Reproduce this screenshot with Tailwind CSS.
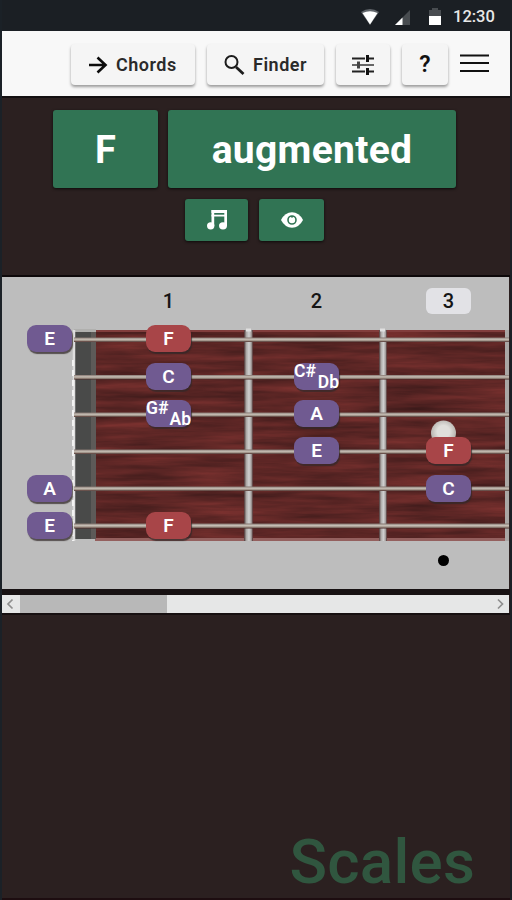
<!DOCTYPE html>
<html lang="en">
<head>
  <meta charset="UTF-8" />
  <meta name="viewport" content="width=device-width, initial-scale=1.0" />
  <title>Scales - F augmented</title>
  <script src="https://cdn.jsdelivr.net/npm/@tailwindcss/browser@4"></script>
</head>
<body class="bg-[#1b2127] font-['Roboto',sans-serif] h-[900px] w-[512px] overflow-hidden">
  <div class="flex flex-col h-[900px] w-[508px] ml-[2px] bg-[#2b2020]">

    <!-- Status bar -->
    <div class="flex items-center justify-end h-[31px] shrink-0 bg-[#1b1f24] pt-[3px] pr-[15px] text-[#e8e8e8]">
      <svg class="w-[20px] h-[18px]" viewBox="0 0 20 18">
        <path d="M1 4Q10-2 19 4L10 17Z" fill="#60656a" />
        <path d="M2.500 5Q10 1.500 17.500 5L10 16.500Z" fill="#fff" />
      </svg>
      <svg class="w-[16px] h-[17px] ml-[15px]" viewBox="0 0 16 17">
        <path d="M0 16L15 1V16Z" fill="#484c50" />
        <path d="M0 16L7.500 8.500V16Z" fill="#fff" />
      </svg>
      <svg class="w-[12px] h-[18px] ml-[18px]" viewBox="0 0 12 18">
        <path d="M0 2H3V0H9V2H12V9H0Z" fill="#484c50" />
        <path d="M0 8H12V17H0Z" fill="#fff" />
      </svg>
      <span class="ml-[12px] w-[42px] text-[16.500px] leading-none whitespace-nowrap font-medium">12:30</span>
    </div>

    <!-- Toolbar -->
    <div class="flex items-start h-[67px] shrink-0 bg-[#f8f8f8] border-b-2 border-[#141011] pt-[13px] pl-[69px] text-[#2a2a2a] text-[18px] font-semibold">
      <button class="flex items-center w-[124px] h-[41px] pl-[16px] rounded-sm bg-[#f5f5f5] shadow-[0_2px_3px_rgba(0,0,0,0.38)]">
        <svg class="w-[21px] h-[20px]" viewBox="0 0 21 20" fill="none" stroke="#0c0c0c" stroke-width="2.600"><path d="M2 10H18.500M10.500 2.500L18.500 10L10.500 17.500" /></svg>
        <span class="ml-[8px] tracking-[0.5px]">Chords</span>
      </button>
      <button class="flex items-center w-[117px] h-[41px] pl-[16px] ml-[12px] rounded-sm bg-[#f5f5f5] shadow-[0_2px_3px_rgba(0,0,0,0.38)]">
        <svg class="w-[22px] h-[22px]" viewBox="0 0 22 22" fill="none" stroke="#1c1c1c"><circle cx="8.500" cy="8" r="6" stroke-width="2" /><path d="M13 13L20.500 20" stroke-width="2.800" /></svg>
        <span class="ml-[8px] tracking-[0.5px]">Finder</span>
      </button>
      <button class="flex items-center justify-center w-[54px] h-[41px] ml-[12px] rounded-sm bg-[#f5f5f5] shadow-[0_2px_3px_rgba(0,0,0,0.38)]">
        <svg class="w-[22px] h-[22px]" viewBox="0 0 22 22" fill="none" stroke="#222">
          <path d="M0 4.500H13M17 4.500H22M0 17.500H13M17 17.500H22" stroke-width="1.900" />
          <path d="M0 11H5M8 11H22" stroke="#666" stroke-width="1.900" />
          <path d="M15.500 1V8M15.500 14V21" stroke="#111" stroke-width="3" />
          <path d="M6.500 7.500V14.500" stroke="#444" stroke-width="3" />
        </svg>
      </button>
      <button class="w-[46px] h-[41px] ml-[12px] rounded-sm bg-[#f5f5f5] text-[23px] leading-[41px] text-[#111] shadow-[0_2px_3px_rgba(0,0,0,0.38)]">?</button>
      <svg class="w-[29px] h-[20px] ml-[12px] mt-[9px]" viewBox="0 0 29 20" stroke="#111" stroke-width="2.200"><path d="M0 2.500H29M0 10H29M0 18H29" /></svg>
    </div>

    <!-- Scale picker -->
    <div class="flex flex-col h-[179px] shrink-0 border-b-2 border-[#0d0809] pt-[12px] text-white font-bold">
      <div class="flex gap-[10px] ml-[51px]">
        <button class="w-[105px] h-[78px] pt-[2px] rounded-[3px] bg-[#317454] text-[38px] shadow-[0_1px_3px_rgba(0,0,0,0.7)]">F</button>
        <button class="w-[288px] h-[78px] pt-[2px] rounded-[3px] bg-[#317454] text-[39px] tracking-[0.300px] shadow-[0_1px_3px_rgba(0,0,0,0.7)]">augmented</button>
      </div>
      <div class="flex gap-[11px] mt-[11px] ml-[183px]">
        <button class="flex items-center justify-center w-[63px] h-[42px] rounded-[3px] bg-[#317454] shadow-[0_1px_3px_rgba(0,0,0,0.7)]">
          <svg class="w-[20px] h-[20px]" viewBox="0 0 20 20" fill="#fff">
            <path d="M4.500 0H20V3H4.500Z" /><path d="M4.500 4.700H20V6.500H4.500Z" />
            <path d="M4.500 0H7.200V16H4.500ZM17.300 0H20V16H17.300Z" />
            <ellipse cx="3.700" cy="15.800" rx="3.700" ry="3.600" /><ellipse cx="16" cy="15.800" rx="4" ry="3.600" />
          </svg>
        </button>
        <button class="flex items-center justify-center w-[65px] h-[42px] rounded-[3px] bg-[#317454] shadow-[0_1px_3px_rgba(0,0,0,0.7)]">
          <svg class="w-[22px] h-[16px]" viewBox="0 0 22 16">
            <path d="M0 8Q4 .3 11 .3T22 8Q18 15.700 11 15.700T0 8Z" fill="#fff" />
            <circle cx="11" cy="8" r="4" fill="none" stroke="#317454" stroke-width="1.600" />
            <circle cx="11" cy="4.800" r="1" fill="#317454" />
          </svg>
        </button>
      </div>
    </div>

    <!-- Fretboard -->
    <div class="relative h-[312px] shrink-0 w-[507px] bg-[#bdbdbd] overflow-hidden">
      <svg class="absolute left-[70px] top-[49px] w-[437px] h-[218px]" viewBox="72 326 437 218">
        <defs>
          <filter id="grain" x="0" y="0" width="100%" height="100%" color-interpolation-filters="sRGB">
            <feTurbulence type="fractalNoise" baseFrequency="0.011 0.13" numOctaves="4" seed="8" />
            <feColorMatrix values="0.3 0 0 0 0.215  0.11 0 0 0 0.095  0.1 0 0 0 0.095  0 0 0 0 1" />
          </filter>
          <linearGradient id="fret">
            <stop offset="0" stop-color="#4a3030" /><stop offset=".25" stop-color="#aaa7a5" /><stop offset=".55" stop-color="#d0d0d0" /><stop offset=".8" stop-color="#a9a5a4" /><stop offset="1" stop-color="#4a2626" />
          </linearGradient>
          <linearGradient id="string" x2="0" y2="1">
            <stop offset="0" stop-color="#857771" /><stop offset=".4" stop-color="#c5bdb4" /><stop offset=".7" stop-color="#a09388" /><stop offset="1" stop-color="#4a2c2a" />
          </linearGradient>
          <radialGradient id="pearl" cx=".5" cy=".45"><stop offset=".5" stop-color="#e0dfdb" /><stop offset="1" stop-color="#b8b5b0" /></radialGradient>
        </defs>
        <rect x="95" y="330" width="414" height="210" filter="url(#grain)" />
        <rect x="95" y="330" width="414" height="2" fill="#813d3c" /><rect x="95" y="538" width="414" height="3" fill="#94605e" />
        <rect x="74" y="330" width="20" height="209" fill="#494a49" />
        <rect x="91" y="330" width="5" height="209" fill="#5d5a58" />
        <rect x="74" y="329" width="22" height="3" fill="#b0b0ae" />
        <path d="M74 330V541" stroke="#dedede" stroke-width="2.500" />
        <path d="M73 360V541" stroke="#f3f3f3" stroke-width="2" stroke-dasharray="6 4" />
        <rect x="244" y="330" width="9" height="211" fill="url(#fret)" />
        <rect x="379" y="330" width="8" height="211" fill="url(#fret)" />
        <rect x="505" y="330" width="5" height="211" fill="#aaa7a5" />
        <path d="M246 330h5M380 330h5" stroke="#e0e0e0" stroke-width="3" />
        <g fill="url(#string)">
          <rect x="74" y="337.500" width="435" height="4.500" /><rect x="74" y="375" width="435" height="4.500" />
          <rect x="74" y="412.500" width="435" height="4.500" /><rect x="74" y="449.500" width="435" height="4.500" />
          <rect x="74" y="486.500" width="435" height="4.500" /><rect x="74" y="523.500" width="435" height="5" />
        </g>
        <circle cx="443.500" cy="433" r="12.500" fill="url(#pearl)" />
      </svg>

      <div class="relative grid grid-cols-[95px_143px_153px_111px] justify-items-center pt-[11px] h-[43px] text-[20px] font-medium leading-[26px] text-[#151515]">
        <span></span>
        <span>1</span>
        <span>2</span>
        <span class="w-[45px] h-[26px] text-center rounded-md bg-[#e2e2e6]">3</span>
      </div>

      <div id="notes" class="relative grid grid-cols-[95px_143px_153px_111px] auto-rows-[37.4px] items-center justify-items-center text-white text-[19px] font-semibold"></div>

      <div class="relative flex justify-center w-[108px] ml-[387px] mt-[11px]">
        <span class="w-[11px] h-[11px] rounded-full bg-black"></span>
      </div>
    </div>

    <!-- Horizontal scrollbar -->
    <div class="border-t-[6px] border-[#181213] shrink-0">
      <div class="flex items-center h-[18px] w-[507px] bg-[#e6e7e7]">
        <svg class="w-[18px] h-[18px]" viewBox="0 0 18 18" fill="none" stroke="#8f8f8f" stroke-width="1.700"><path d="M10.500 4.500L6 9L10.500 13.500" /></svg>
        <span class="w-[147px] h-[18px] bg-[#b8b8b8]"></span>
        <svg class="w-[18px] h-[18px] ml-auto" viewBox="0 0 18 18" fill="none" stroke="#8f8f8f" stroke-width="1.700"><path d="M7 4.500L11.500 9L7 13.500" /></svg>
      </div>
      <div class="h-[2px] bg-[#171011]"></div>
    </div>

    <div class="flex items-end justify-end grow pr-[35px] border-b-2 border-[#1d0d10]">
      <h1 class="text-[62px] leading-[72px] font-medium tracking-[0.2px] text-[#30563f]">Scales</h1>
    </div>
  </div>

  <script>
    // one row per string, columns are open, 1, 2, 3
    const strings = [
      ["E", "F", "", ""],
      ["", "C", "C#/Db", ""],
      ["", "G#/Ab", "A", ""],
      ["", "", "E", "F"],
      ["A", "", "", "C"],
      ["E", "F", "", ""]
    ];

    const pill = "w-[45px] h-[27px] rounded-[9px] leading-[27px] text-center shadow-[1px_2px_1px_rgba(50,40,40,0.75)]";
    const notes = document.getElementById("notes");

    strings.forEach(row => {
      row.forEach((note, fret) => {
        const el = document.createElement("span");
        if (note) {
          el.className = pill + (note === "F" ? " bg-[#a84548]" : " bg-[#705a91]");
          if (note.includes("/")) {
            const [sharp, flat] = note.split("/");
            el.className += " flex justify-between text-[17.5px]";
            el.innerHTML = `<span class="-mt-[5px]">${sharp}</span><span class="mt-[6px] -ml-[1px]">${flat}</span>`;
          } else {
            el.textContent = note;
          }
        }
        notes.appendChild(el);
      });
    });
  </script>
</body>
</html>
